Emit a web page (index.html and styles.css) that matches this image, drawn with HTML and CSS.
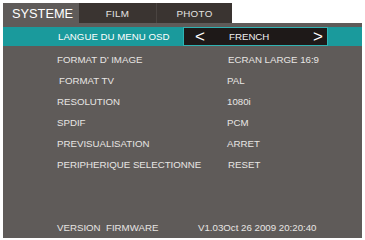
FILE: index.html
```html
<!DOCTYPE html>
<html>
<head>
<meta charset="utf-8">
<link rel="stylesheet" href="styles.css">
</head>
<body>
<div class="screen">
  <div class="tabs">
    <div class="tab active">SYSTEME</div>
    <div class="tab film">FILM</div>
    <div class="tab photo">PHOTO</div>
    <div class="tab-rest"></div>
  </div>
  <div class="panel">
    <div class="row selected">
      <div class="label">LANGUE DU MENU OSD</div>
      <div class="selector">
        <span class="arrow left">&lt;</span>
        <span class="sel-value">FRENCH</span>
        <span class="arrow right">&gt;</span>
      </div>
    </div>
    <div class="rows">
      <div class="row"><div class="label">FORMAT D&#8217; IMAGE</div><div class="value">ECRAN LARGE 16:9</div></div>
      <div class="row"><div class="label indent">FORMAT TV</div><div class="value shift">PAL</div></div>
      <div class="row"><div class="label">RESOLUTION</div><div class="value shift">1080i</div></div>
      <div class="row"><div class="label">SPDIF</div><div class="value shift">PCM</div></div>
      <div class="row"><div class="label">PREVISUALISATION</div><div class="value shift">ARRET</div></div>
      <div class="row"><div class="label">PERIPHERIQUE SELECTIONNE</div><div class="value">RESET</div></div>
    </div>
    <div class="row version">
      <div class="label">VERSION&nbsp; FIRMWARE</div>
      <div class="value fw">V1.03Oct 26 2009 20:20:40</div>
    </div>
  </div>
</div>
</body>
</html>
```
FILE: styles.css
```css
html, body {
  margin: 0;
  padding: 0;
  background: #ffffff;
}
body {
  width: 365px;
  height: 240px;
  overflow: hidden;
  font-family: "Liberation Sans", Arial, sans-serif;
}
.screen {
  margin: 3px 0 0 3px;
  width: 359px;
  height: 235px;
  display: flex;
  flex-direction: column;
}
.tabs {
  display: flex;
  height: 20px;
  flex: none;
}
.tab {
  display: flex;
  align-items: center;
  justify-content: center;
  color: #e4e2e0;
  font-size: 9.8px;
  letter-spacing: 0.3px;
}
.tab.active {
  width: 76px;
  background: #5f5b59;
  color: #ffffff;
  font-size: 12.8px;
  letter-spacing: 0;
  justify-content: flex-start;
  padding-left: 9px;
  box-sizing: border-box;
}
.tab.film {
  width: 77px;
  background: #3a3431;
  border-right: 1px solid #4a4441;
}
.tab.photo {
  width: 75px;
  background: #3a3431;
}
.tab-rest {
  flex: 1;
  background: #ffffff;
}
.panel {
  flex: 1;
  background: #5f5b59;
  display: flex;
  flex-direction: column;
  padding-top: 4px;
}
.row {
  display: flex;
  align-items: center;
  height: 21px;
  color: #e8e6e4;
  font-size: 9.7px;
  letter-spacing: 0;
}
.label {
  width: 225px;
  padding-left: 54px;
  box-sizing: border-box;
  flex: none;
  white-space: nowrap;
}
.label.indent {
  padding-left: 56px;
}
.value {
  white-space: nowrap;
}
.value.shift {
  margin-left: -1px;
}
.row.selected {
  height: 19px;
  background: #1a9a9c;
  color: #ffffff;
  margin-bottom: 3px;
}
.row.selected .label {
  width: 180px;
  padding-left: 55px;
}
.selector {
  width: 145px;
  height: 19px;
  box-sizing: border-box;
  background: #1e1918;
  border: 1px solid #2fb3b3;
  display: flex;
  align-items: center;
  padding-left: 11px;
  padding-right: 4px;
}
.arrow {
  font-size: 17px;
  line-height: 1;
  color: #ffffff;
}
.arrow.left {
  width: 34px;
}
.arrow.right {
  margin-left: auto;
}
.sel-value {
  color: #f0f0f0;
}
.row.version {
  margin-top: auto;
  margin-bottom: 0px;
}
.version .label {
  width: 195px;
}
```
